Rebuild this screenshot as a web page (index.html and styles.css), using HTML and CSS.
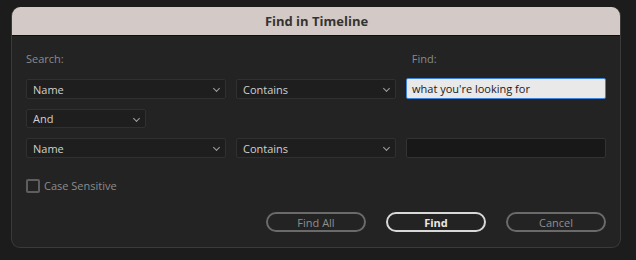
FILE: index.html
```html
<!DOCTYPE html>
<html lang="en">
<head>
  <meta charset="UTF-8">
  <title>Find in Timeline</title>
  <link rel="stylesheet" href="styles.css">
</head>
<body>
  <div class="dialog">
    <div class="title-bar">Find in Timeline</div>
    <div class="dialog-body">
      <div class="labels">
        <span class="label">Search:</span>
        <span class="label find-label">Find:</span>
      </div>
      <div class="row">
        <div class="select wide">Name<span class="chev"></span></div>
        <div class="select mid">Contains<span class="chev"></span></div>
        <div class="text-input active">what you're looking for</div>
      </div>
      <div class="row">
        <div class="select small">And<span class="chev"></span></div>
      </div>
      <div class="row">
        <div class="select wide">Name<span class="chev"></span></div>
        <div class="select mid">Contains<span class="chev"></span></div>
        <div class="text-input"></div>
      </div>
      <label class="check"><span class="box"></span>Case Sensitive</label>
      <div class="buttons">
        <button class="btn">Find All</button>
        <button class="btn primary">Find</button>
        <button class="btn">Cancel</button>
      </div>
    </div>
  </div>
</body>
</html>
```

FILE: styles.css
```css
body {
    margin: 0;
    padding: 7px 14px 12px 11px;
    background: #1c1c1c;
    font-family: "Open Sans", "Noto Sans", sans-serif;
    font-size: 11px;
}
.dialog {
    width: 610px;
    height: 241px;
    border: 1px solid #3a3a3a;
    border-top: none;
    border-radius: 9px;
    background: #232323;
    overflow: hidden;
    box-sizing: border-box;
}
.title-bar {
    height: 28px;
    background: #d3c9c6;
    border-bottom: 1px solid #0e0e0e;
    color: #333;
    font-weight: bold;
    font-size: 13px;
    display: flex;
    align-items: center;
    justify-content: center;
    padding-left: 1px;
}
.dialog-body {
    padding: 12px 14px 0 14px;
}
.labels {
    display: flex;
    height: 20px;
    align-items: center;
    color: #8a8a8a;
    margin-bottom: 11px;
}
.find-label {
    margin-left: 348px;
}
.row {
    display: flex;
    gap: 10px;
    margin-bottom: 10px;
}
.select {
    height: 20px;
    box-sizing: border-box;
    border: 1px solid #303030;
    border-radius: 2px;
    background: #1e1e1e;
    color: #d0d0d0;
    display: flex;
    align-items: center;
    padding: 0 6px;
    position: relative;
}
.wide { width: 200px; }
.mid { width: 160px; }
.small { width: 120px; height: 19px; }
.chev {
    position: absolute;
    right: 6px;
    top: 6px;
    width: 4px;
    height: 4px;
    border-right: 1px solid #a0a0a0;
    border-bottom: 1px solid #a0a0a0;
    transform: rotate(45deg);
}
.text-input {
    width: 200px;
    height: 20px;
    box-sizing: border-box;
    border: 1px solid #333;
    border-radius: 2px;
    background: #181818;
    display: flex;
    align-items: center;
    padding: 0 5px;
}
.text-input.active {
    background: #e9e9e9;
    border-color: #3d84d8;
    color: #1a1a1a;
    height: 21px;
    margin-top: -1px;
}
.check {
    display: flex;
    align-items: center;
    gap: 4px;
    color: #8c8c8c;
    margin-top: 20px;
    height: 15px;
}
.box {
    width: 14px;
    height: 14px;
    box-sizing: border-box;
    border: 2px solid #5e5e5e;
    border-radius: 2px;
}
.buttons {
    display: flex;
    justify-content: flex-end;
    gap: 20px;
    margin-top: 19px;
}
.btn {
    width: 100px;
    height: 20px;
    border: 2px solid #6a6a6a;
    border-radius: 10px;
    background: transparent;
    color: #8e8e8e;
    font-family: inherit;
    font-size: 11px;
    padding: 0;
}
.btn.primary {
    border-color: #d8d8d8;
    color: #e8e8e8;
    font-weight: bold;
}
```
